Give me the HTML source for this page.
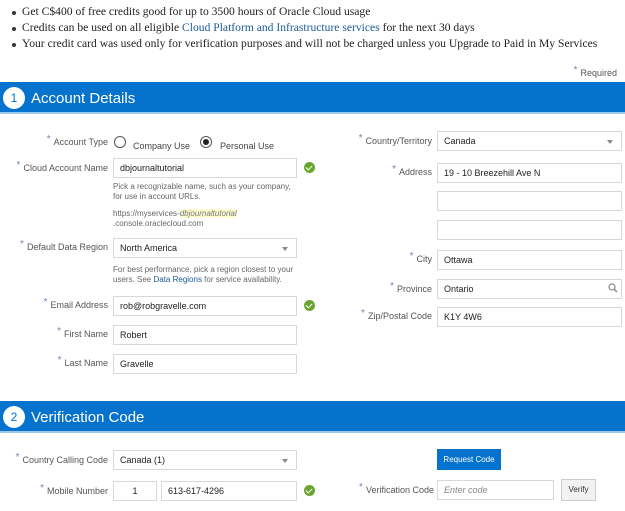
<!DOCTYPE html>
<html><head><meta charset="utf-8"><style>
*{margin:0;padding:0;box-sizing:border-box}
body{width:625px;height:511px;background:#fff;position:relative;overflow:hidden;font-family:"Liberation Sans",sans-serif}
.a{position:absolute}
.bul{font-family:"Liberation Serif",serif;font-size:11.6px;color:#222;left:22px;white-space:nowrap}
.bul:before{content:"";position:absolute;left:-10px;top:6px;width:4px;height:4px;border-radius:50%;background:#333}
.lnk{color:#1a5a96}
.bar{left:0;width:625px;height:32px;background:#0572ce;border-bottom:2px solid #9cc8ea}
.circ{position:absolute;left:3px;top:5px;width:22px;height:22px;border-radius:50%;background:#fff;color:#0572ce;font-size:12px;text-align:center;line-height:22px}
.bt{position:absolute;left:31px;top:8px;color:#fff;font-size:15px;white-space:nowrap}
.lb{font-size:9px;color:#555;text-align:right;white-space:nowrap}
.lb i{font-style:normal;color:#6a8ab0;font-size:10px;vertical-align:3px;margin-right:3px}
.in{border:1px solid #d8d8d8;background:#fff;font-size:9px;color:#222;padding-left:6px;line-height:18px;white-space:nowrap;overflow:hidden}
.dd:after{content:"";position:absolute;right:8px;top:8px;border:3px solid transparent;border-top:4px solid #888}
.help{font-size:8px;color:#666;white-space:nowrap;line-height:10px}
.ok{width:11px;height:11px;border-radius:50%;background:#6aa531}
.ok:after{content:"";position:absolute;left:3px;top:2px;width:3px;height:5px;border:solid #fff;border-width:0 1.5px 1.5px 0;transform:rotate(45deg)}
</style></head><body>
<div class="a bul" style="top:5px">Get C$400 of free credits good for up to 3500 hours of Oracle Cloud usage</div>
<div class="a bul" style="top:21px">Credits can be used on all eligible <span class="lnk">Cloud Platform and Infrastructure services</span> for the next 30 days</div>
<div class="a bul" style="top:37px">Your credit card was used only for verification purposes and will not be charged unless you Upgrade to Paid in My Services</div>
<div class="a lb" style="right:8px;top:65px"><i>*</i>Required</div>

<div class="a bar" style="top:82px"><div class="circ">1</div><div class="bt">Account Details</div></div>

<div class="a lb" style="right:517px;top:134px"><i>*</i>Account Type</div>
<div class="a" style="left:114px;top:136px;width:12px;height:12px;border:1px solid #555;border-radius:50%"></div>
<div class="a lb" style="left:133px;top:141px;color:#444">Company Use</div>
<div class="a" style="left:200px;top:136px;width:12px;height:12px;border:1px solid #555;border-radius:50%"><div style="margin:2px;width:6px;height:6px;border-radius:50%;background:#222"></div></div>
<div class="a lb" style="left:220px;top:141px;color:#444">Personal Use</div>

<div class="a lb" style="right:517px;top:160px"><i>*</i>Cloud Account Name</div>
<div class="a in" style="left:113px;top:158px;width:184px;height:20px">dbjournaltutorial</div>
<div class="a ok" style="left:304px;top:162px"></div>
<div class="a help" style="left:113px;top:182px">Pick a recognizable name, such as your company,<br>for use in account URLs.</div>
<div class="a help" style="left:113px;top:209px">https://myservices-<i style="background:#fdfbd0;color:#777">dbjournaltutorial</i><br>.console.oraclecloud.com</div>

<div class="a lb" style="right:517px;top:239px"><i>*</i>Default Data Region</div>
<div class="a in dd" style="left:113px;top:238px;width:184px;height:20px">North America</div>
<div class="a help" style="left:113px;top:265px">For best performance, pick a region closest to your<br>users. See <span class="lnk">Data Regions</span> for service availability.</div>

<div class="a lb" style="right:517px;top:297px"><i>*</i>Email Address</div>
<div class="a in" style="left:113px;top:296px;width:184px;height:20px">rob@robgravelle.com</div>
<div class="a ok" style="left:304px;top:300px"></div>
<div class="a lb" style="right:517px;top:326px"><i>*</i>First Name</div>
<div class="a in" style="left:113px;top:325px;width:184px;height:20px">Robert</div>
<div class="a lb" style="right:517px;top:355px"><i>*</i>Last Name</div>
<div class="a in" style="left:113px;top:354px;width:184px;height:20px">Gravelle</div>

<div class="a lb" style="right:193px;top:133px"><i>*</i>Country/Territory</div>
<div class="a in dd" style="left:437px;top:131px;width:185px;height:20px">Canada</div>
<div class="a lb" style="right:193px;top:164px"><i>*</i>Address</div>
<div class="a in" style="left:437px;top:163px;width:185px;height:20px">19 - 10 Breezehill Ave N</div>
<div class="a in" style="left:437px;top:191px;width:185px;height:20px"></div>
<div class="a in" style="left:437px;top:220px;width:185px;height:20px"></div>
<div class="a lb" style="right:193px;top:251px"><i>*</i>City</div>
<div class="a in" style="left:437px;top:250px;width:185px;height:20px">Ottawa</div>
<div class="a lb" style="right:193px;top:281px"><i>*</i>Province</div>
<div class="a in" style="left:437px;top:279px;width:185px;height:20px">Ontario</div>
<svg class="a" style="left:608px;top:283px" width="10" height="10"><circle cx="4" cy="4" r="3" fill="none" stroke="#888" stroke-width="1.2"/><path d="M6 6L9 9" stroke="#888" stroke-width="1.5"/></svg>
<div class="a lb" style="right:193px;top:308px"><i>*</i>Zip/Postal Code</div>
<div class="a in" style="left:437px;top:307px;width:185px;height:20px">K1Y 4W6</div>

<div class="a bar" style="top:401px"><div class="circ">2</div><div class="bt">Verification Code</div></div>

<div class="a lb" style="right:517px;top:452px"><i>*</i>Country Calling Code</div>
<div class="a in dd" style="left:113px;top:450px;width:184px;height:20px">Canada (1)</div>
<div class="a lb" style="right:517px;top:483px"><i>*</i>Mobile Number</div>
<div class="a in" style="left:113px;top:481px;width:44px;height:20px;text-align:center;padding:0">1</div>
<div class="a in" style="left:161px;top:481px;width:136px;height:20px">613-617-4296</div>
<div class="a ok" style="left:304px;top:485px"></div>

<div class="a" style="left:437px;top:449px;width:64px;height:21px;background:#0572ce;color:#fff;font-size:8px;text-align:center;line-height:21px">Request Code</div>
<div class="a lb" style="right:191px;top:482px"><i>*</i>Verification Code</div>
<div class="a in" style="left:437px;top:480px;width:117px;height:20px;color:#888;font-style:italic">Enter code</div>
<div class="a" style="left:561px;top:479px;width:35px;height:22px;background:#f2f2f2;border:1px solid #ccc;font-size:8px;color:#333;text-align:center;line-height:20px">Verify</div>
</body></html>
